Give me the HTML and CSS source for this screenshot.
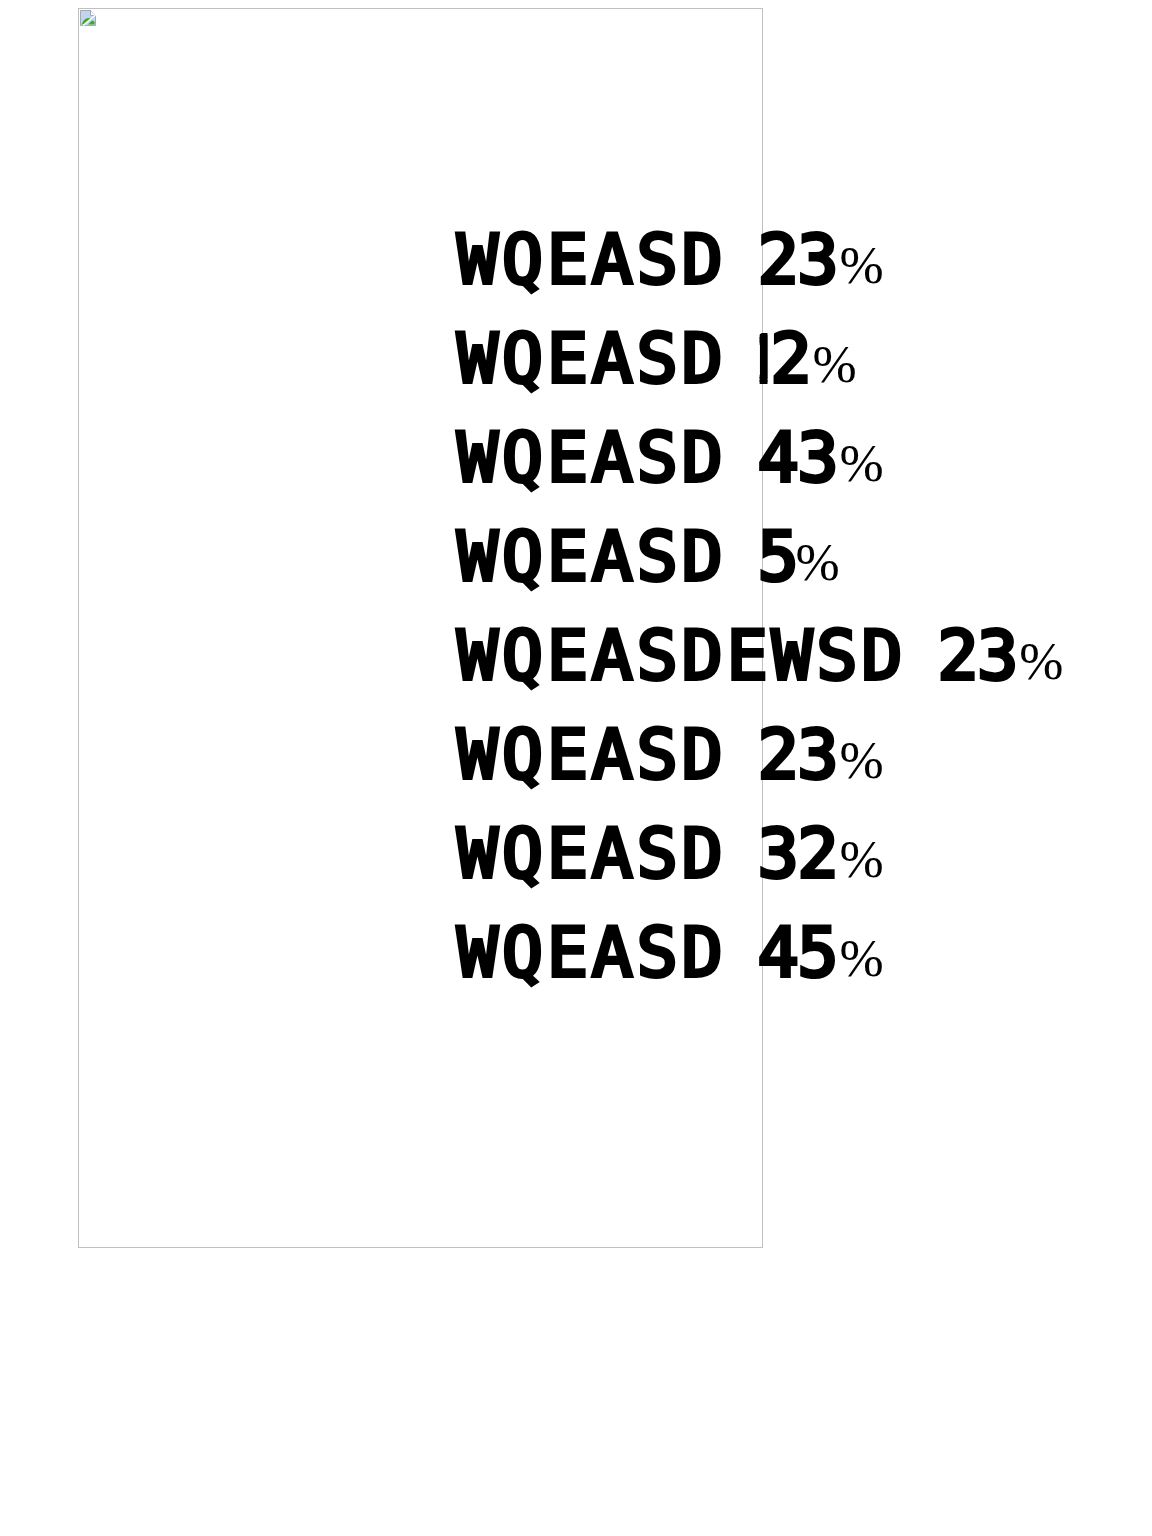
FILE: index.html
```html
<!DOCTYPE html>
<html lang="en">
<head>
    <meta charset="UTF-8">
    <title></title>
    <link rel="stylesheet" href="styles.css">
</head>
<body>
<div id="wrap">
    <div class="pic">
        <svg class="broken" width="16" height="16" viewBox="0 0 16 16">
            <path d="M0.5 0.5H10.5L15.5 5.5V15.5H0.5Z" fill="#c0d4f0" stroke="#a3a9b3"/>
            <path d="M10.5 0.5V5.5H15.5" fill="#fff" stroke="#a3a9b3"/>
            <path d="M1.5 14.5C4 8.5 7 7 11 8.5L4.5 14.5Z" fill="#44a824"/>
            <path d="M8 14.5L12 10.5L14.5 11.5V14.5Z" fill="#44a824"/>
            <path d="M3 15.5L15.5 5" stroke="#fff" stroke-width="1.6"/>
        </svg>
    </div>
    <ul class="list">
        <li><span class="name">WQEASD</span><span class="num">23</span><span class="pct">%</span></li>
        <li><span class="name">WQEASD</span><span class="num"><span class="one">1</span>2</span><span class="pct">%</span></li>
        <li><span class="name">WQEASD</span><span class="num">43</span><span class="pct">%</span></li>
        <li><span class="name">WQEASD</span><span class="num five">5</span><span class="pct">%</span></li>
        <li><span class="name">WQEASDEWSD</span><span class="num">23</span><span class="pct">%</span></li>
        <li><span class="name">WQEASD</span><span class="num">23</span><span class="pct">%</span></li>
        <li><span class="name">WQEASD</span><span class="num">32</span><span class="pct">%</span></li>
        <li><span class="name">WQEASD</span><span class="num">45</span><span class="pct">%</span></li>
    </ul>
</div>
</body>
</html>
```

FILE: styles.css
```css
body, div, ul, li, span {
    margin: 0;
    padding: 0;
}

ul, li {
    list-style-type: none;
}

body {
    background-color: #fff;
    color: #000;
}

#wrap {
    position: relative;
    margin: 8px 0 0 78px;
    width: 685px;
    height: 1240px;
}

.pic {
    box-sizing: border-box;
    padding: 1px;
    width: 100%;
    height: 100%;
    border: 1px solid #c0c0c0;
}

.broken {
    display: block;
}

.list {
    position: absolute;
    top: 202px;
    left: 379px;
    white-space: nowrap;
}

.list li {
    display: flex;
    align-items: baseline;
    height: 99px;
    line-height: 99px;
}

.name,
.num {
    font-family: "DejaVu Sans Mono", monospace;
    font-size: 68px;
    -webkit-text-stroke: 4px #000;
}

.name {
    margin-right: 31px;
    letter-spacing: 4px;
}

.num {
    letter-spacing: -1px;
}

/* only the stem of the 1 stays visible */
.num .one {
    display: inline-block;
    margin: 0 13px 0 -13px;
    clip-path: inset(0 -10px 0 15px);
    font-family: "Liberation Sans", sans-serif;
    letter-spacing: -25px;
}

.five {
    margin-right: -4px;
}

.pct {
    margin-left: 2px;
    font-family: "Liberation Serif", serif;
    font-size: 53px;
}
```
